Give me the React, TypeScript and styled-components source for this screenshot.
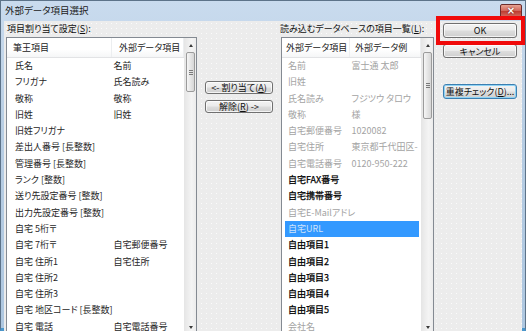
import React from 'react';
import styled, { createGlobalStyle } from 'styled-components';

const GlobalStyle = createGlobalStyle`
  html, body {
    margin: 0;
    padding: 0;
  }
  body {
    width: 526px;
    height: 331px;
    overflow: hidden;
    font-family: "Noto Sans CJK JP", "Noto Sans", sans-serif;
    font-feature-settings: "palt";
  }
`;

const Window = styled.div`
  position: relative;
  width: 526px;
  height: 331px;
  box-sizing: border-box;
  display: flex;
  flex-direction: column;
  padding: 0 3px;
  border: 1px solid #5d7389;
  border-bottom: 3px solid #4b97cc;
  background: linear-gradient(#c9dbee, #b7cde3 40%, #aec7e0);
`;

const TitleBar = styled.div`
  height: 20px;
  flex: none;
  display: flex;
  align-items: flex-start;
  padding-left: 1px;
`;

const Title = styled.span`
  font-size: 9.5px;
  line-height: 18px;
  color: #1b1b1b;
`;

const CloseButton = styled.div`
  margin-left: auto;
  margin-top: 3px;
  width: 22px;
  height: 14px;
  box-sizing: border-box;
  border: 1px solid #6b2c2c;
  border-radius: 2px;
  background: linear-gradient(#e8a393, #d0655a 50%, #bd3a2e 50%, #d27063);
  display: flex;
  align-items: center;
  justify-content: center;
  color: #fff;
  font-family: "DejaVu Sans", sans-serif;
  font-size: 10px;
  font-weight: bold;
  line-height: 1;
  text-shadow: 0 0 2px #5a1a10;
`;

const Body = styled.div`
  flex: 1;
  display: grid;
  grid-template-columns: 191px 84px 153px 1fr;
  padding: 0 0 1px 2px;
  background-color: #ececec;
  background-image: radial-gradient(#fbfbfb 0.6px, transparent 0.9px);
  background-size: 5px 5px;
`;

const Panel = styled.div`
  display: flex;
  flex-direction: column;
  min-height: 0;
`;

const Label = styled.div<{ $shift: number }>`
  height: 16px;
  line-height: 16px;
  font-size: 9px;
  color: #111;
  margin-left: ${(p) => p.$shift}px;
  white-space: nowrap;
`;

const ListBox = styled.div`
  flex: 1;
  min-height: 0;
  display: flex;
  border: 1px solid #848a92;
  background: #fff;
  overflow: hidden;
`;

const ListContent = styled.div`
  flex: 1;
  min-width: 0;
  display: flex;
  flex-direction: column;
  overflow: hidden;
`;

const Header = styled.div<{ $cols: string }>`
  flex: none;
  height: 19px;
  display: grid;
  grid-template-columns: ${(p) => p.$cols};
  border-bottom: 1px solid #e2e3e5;
  background: linear-gradient(#ffffff, #ffffff 60%, #f5f6f7);
`;

const HeaderCell = styled.div<{ $pad: number }>`
  padding-left: ${(p) => p.$pad}px;
  font-size: 9px;
  line-height: 19px;
  color: #222;
  white-space: nowrap;
  overflow: hidden;
  border-right: 1px solid #eceef0;
`;

type Tone = 'normal' | 'dim' | 'strong';

const Row = styled.div<{ $cols: string; $pad: number; $tone: Tone; $selected?: boolean }>`
  flex: none;
  height: 16.3px;
  margin: 0 2px 0 3px;
  padding-left: ${(p) => p.$pad}px;
  display: grid;
  grid-template-columns: ${(p) => p.$cols};
  font-size: 9px;
  line-height: 16.3px;
  white-space: nowrap;
  background: ${(p) => (p.$selected ? '#3399ff' : 'transparent')};
  color: ${(p) =>
    p.$selected ? '#cfe3fb' : p.$tone === 'dim' ? '#a3a3a3' : p.$tone === 'strong' ? '#000' : '#262626'};
  -webkit-text-stroke: ${(p) => (p.$tone === 'strong' ? '0.25px #000' : '0')};
`;

const Cell = styled.span`
  min-width: 0;
`;

const ScrollTrack = styled.div`
  flex: none;
  width: 11px;
  display: flex;
  flex-direction: column;
  align-items: center;
  border-left: 1px solid #e6e6e6;
  background: linear-gradient(90deg, #e7e7e7, #f4f4f4 60%, #ececec);
`;

const ArrowBox = styled.div<{ $h: number }>`
  height: ${(p) => p.$h}px;
  flex: none;
  display: flex;
  align-items: center;
  justify-content: center;
`;

const Triangle = styled.span<{ $down?: boolean }>`
  width: 0;
  height: 0;
  border-left: 2.5px solid transparent;
  border-right: 2.5px solid transparent;
  ${(p) => (p.$down ? 'border-top: 3px solid #3a3a3a;' : 'border-bottom: 3px solid #3a3a3a;')}
`;

const Thumb = styled.div<{ $size: number }>`
  flex: none;
  height: ${(p) => p.$size}px;
  width: 9px;
  box-sizing: border-box;
  border: 1px solid #9b9b9b;
  border-radius: 2px;
  background: linear-gradient(90deg, #f6f6f6, #e4e4e4 55%, #d6d6d6);
  display: flex;
  align-items: center;
  justify-content: center;

  &::after {
    content: '';
    width: 4px;
    height: 5px;
    background: repeating-linear-gradient(#7a7a7a 0 1px, transparent 1px 2px);
  }
`;

const Gap = styled.div`
  flex: 1;
`;

const MiddleColumn = styled.div`
  display: flex;
  flex-direction: column;
  align-items: center;
  padding-top: 60px;
  gap: 6px;
`;

const ButtonColumn = styled.div`
  display: flex;
  flex-direction: column;
  padding: 2px 0 0 9px;
`;

const PushButton = styled.button<{ $w: number; $h: number; $gap?: number; $focus?: boolean }>`
  width: ${(p) => p.$w}px;
  height: ${(p) => p.$h}px;
  margin-top: ${(p) => p.$gap ?? 0}px;
  padding: 0;
  box-sizing: border-box;
  font-family: "Noto Sans CJK JP", sans-serif;
  font-feature-settings: "palt";
  font-size: 9px;
  line-height: 1;
  color: #111;
  white-space: nowrap;
  border: 1px solid ${(p) => (p.$focus ? '#3c7fb1' : '#707070')};
  border-radius: 3px;
  background: linear-gradient(#f3f3f3, #ebebeb 48%, #dddddd 52%, #cfcfcf);
  box-shadow: inset 0 0 0 1px ${(p) => (p.$focus ? '#8ed3f5' : 'rgba(255,255,255,0.75)')};
`;

const Callout = styled.div`
  position: absolute;
  left: 435px;
  top: 15px;
  width: 89px;
  height: 29px;
  box-sizing: border-box;
  border: 4px solid #f00a0a;
  pointer-events: none;
`;

interface RowData {
  name: string;
  value?: string;
  tone?: Tone;
  selected?: boolean;
}

const leftRows: RowData[] = [
  { name: '氏名', value: '名前' },
  { name: 'フリガナ', value: '氏名読み' },
  { name: '敬称', value: '敬称' },
  { name: '旧姓', value: '旧姓' },
  { name: '旧姓フリガナ' },
  { name: '差出人番号 [長整数]' },
  { name: '管理番号 [長整数]' },
  { name: 'ランク [整数]' },
  { name: '送り先設定番号 [整数]' },
  { name: '出力先設定番号 [整数]' },
  { name: '自宅 5桁〒' },
  { name: '自宅 7桁〒', value: '自宅郵便番号' },
  { name: '自宅 住所1', value: '自宅住所' },
  { name: '自宅 住所2' },
  { name: '自宅 住所3' },
  { name: '自宅 地区コード [長整数]' },
  { name: '自宅 電話', value: '自宅電話番号' },
];

const rightRows: RowData[] = [
  { name: '名前', value: '富士通 太郎', tone: 'dim' },
  { name: '旧姓', tone: 'dim' },
  { name: '氏名読み', value: 'フジツウ タロウ', tone: 'dim' },
  { name: '敬称', value: '様', tone: 'dim' },
  { name: '自宅郵便番号', value: '1020082', tone: 'dim' },
  { name: '自宅住所', value: '東京都千代田区-', tone: 'dim' },
  { name: '自宅電話番号', value: '0120-950-222', tone: 'dim' },
  { name: '自宅FAX番号', tone: 'strong' },
  { name: '自宅携帯番号', tone: 'strong' },
  { name: '自宅E-Mailアドレ', tone: 'dim' },
  { name: '自宅URL', tone: 'dim', selected: true },
  { name: '自由項目1', tone: 'strong' },
  { name: '自由項目2', tone: 'strong' },
  { name: '自由項目3', tone: 'strong' },
  { name: '自由項目4', tone: 'strong' },
  { name: '自由項目5', tone: 'strong' },
  { name: '会社名', tone: 'dim' },
];

interface FieldListProps {
  headers: [string, string];
  headerCols: string;
  headerPad: number;
  rowCols: string;
  rowPad: number;
  rows: RowData[];
  thumb: number;
}

const FieldList = ({ headers, headerCols, headerPad, rowCols, rowPad, rows, thumb }: FieldListProps) => (
  <ListBox>
    <ListContent>
      <Header $cols={headerCols}>
        <HeaderCell $pad={headerPad}>{headers[0]}</HeaderCell>
        <HeaderCell $pad={headerPad + 1}>{headers[1]}</HeaderCell>
      </Header>
      {rows.map((r, i) => (
        <Row key={i} $cols={rowCols} $pad={rowPad} $tone={r.tone ?? 'normal'} $selected={r.selected}>
          <Cell>{r.name}</Cell>
          <Cell>{r.value ?? ''}</Cell>
        </Row>
      ))}
    </ListContent>
    <ScrollTrack>
      <ArrowBox $h={14}>
        <Triangle />
      </ArrowBox>
      <Thumb $size={thumb} />
      <Gap />
      <ArrowBox $h={15}>
        <Triangle $down />
      </ArrowBox>
    </ScrollTrack>
  </ListBox>
);

const App = () => {
  return (
    <>
      <GlobalStyle />
      <Window>
        <TitleBar>
          <Title>外部データ項目選択</Title>
          <CloseButton>×</CloseButton>
        </TitleBar>
        <Body>
          <Panel>
            <Label $shift={1}>
              項目割り当て設定(<u>S</u>):
            </Label>
            <FieldList
              headers={['筆王項目', '外部データ項目']}
              headerCols="105px 1fr"
              headerPad={6}
              rowCols="98.5px 1fr"
              rowPad={5}
              rows={leftRows}
              thumb={40}
            />
          </Panel>
          <MiddleColumn>
            <PushButton $w={68} $h={13}>
              &lt;- 割り当て(<u>A</u>)
            </PushButton>
            <PushButton $w={68} $h={13}>
              解除(<u>R</u>) -&gt;
            </PushButton>
          </MiddleColumn>
          <Panel>
            <Label $shift={-1}>
              読み込むデータベースの項目一覧(<u>L</u>):
            </Label>
            <FieldList
              headers={['外部データ項目', '外部データ例']}
              headerCols="68px 1fr"
              headerPad={4}
              rowCols="63.5px 1fr"
              rowPad={3}
              rows={rightRows}
              thumb={67}
            />
          </Panel>
          <ButtonColumn>
            <PushButton $w={74} $h={15}>
              OK
            </PushButton>
            <PushButton $w={74} $h={14} $gap={6}>
              キャンセル
            </PushButton>
            <PushButton $w={74} $h={15} $gap={26} $focus>
              重複チェック(<u>D</u>)...
            </PushButton>
          </ButtonColumn>
        </Body>
        <Callout />
      </Window>
    </>
  );
};

export default App;
